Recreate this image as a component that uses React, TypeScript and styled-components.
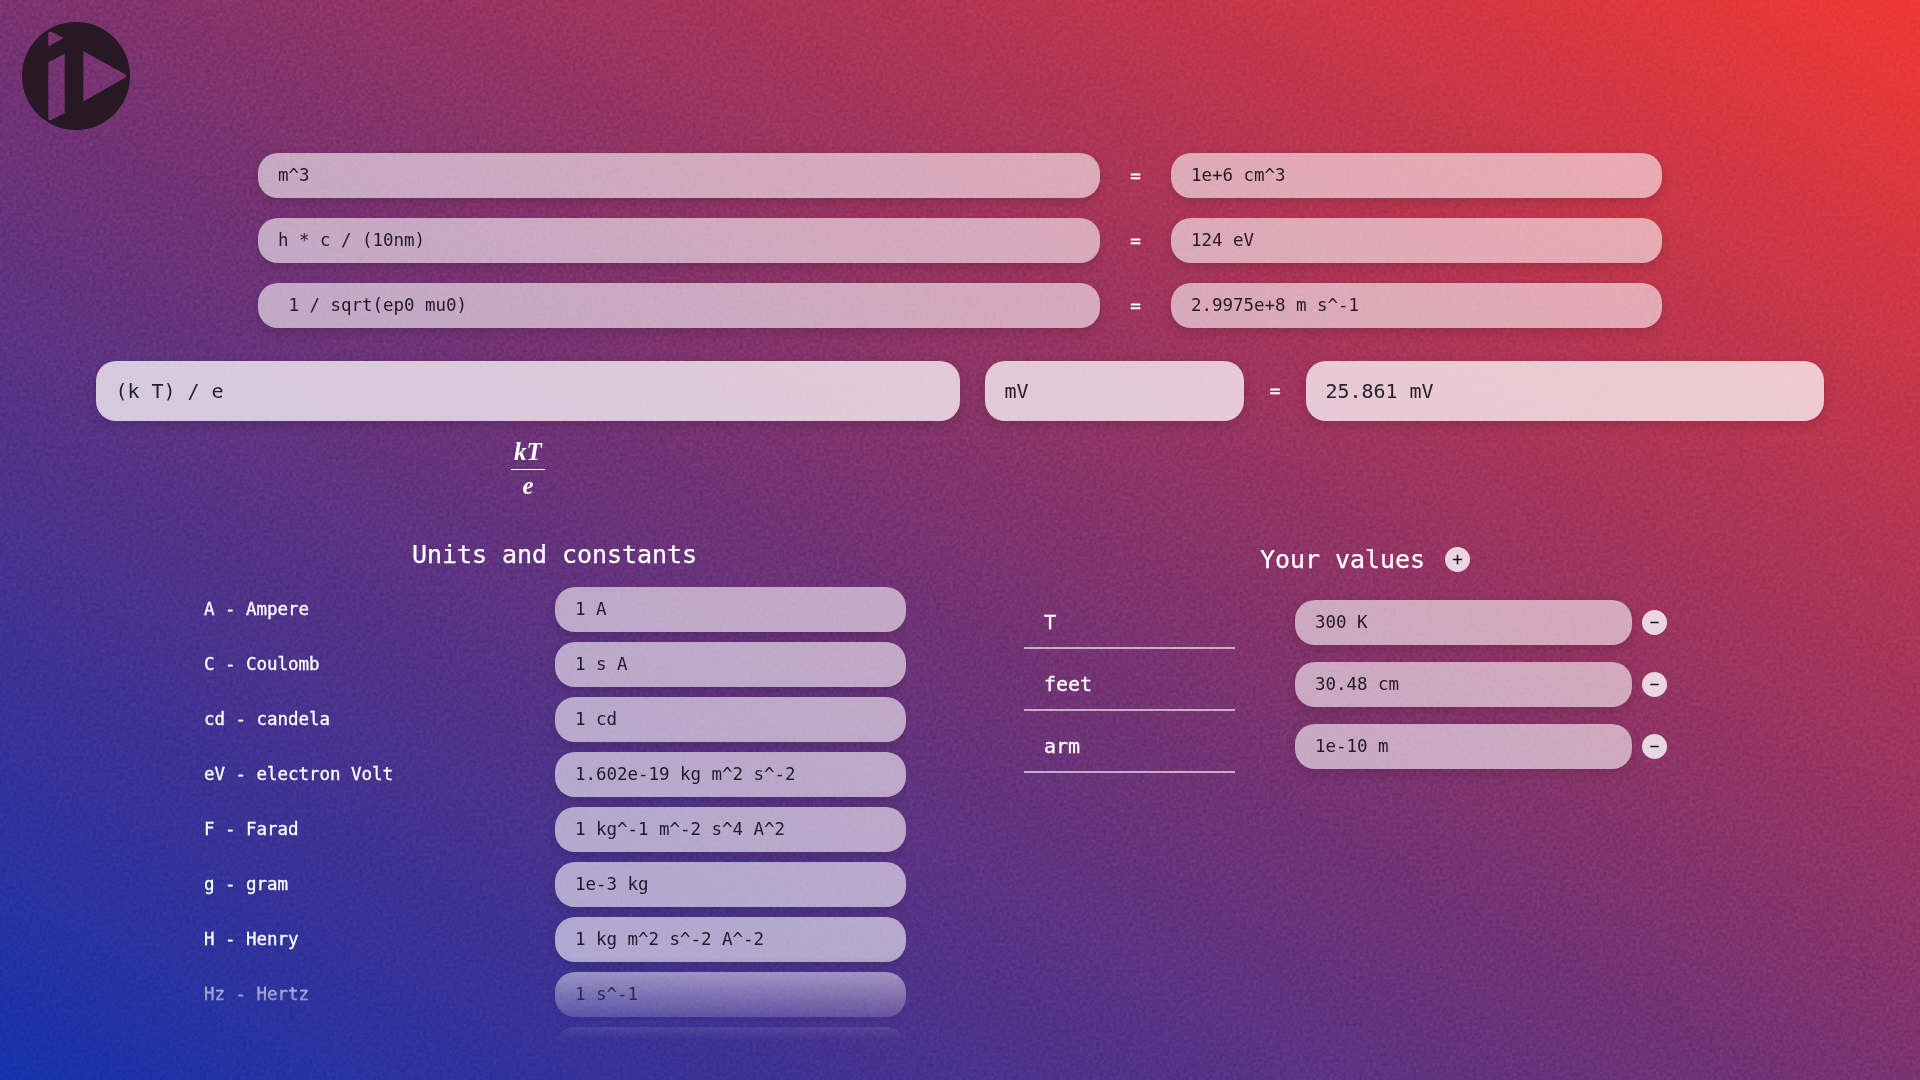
import React from 'react';
import styled, { createGlobalStyle } from 'styled-components';

const Global = createGlobalStyle`
  * { box-sizing: border-box; }
  html, body { margin: 0; height: 100%; overflow: hidden; }
`;

const Page = styled.main`
  position: relative;
  isolation: isolate;
  width: 1920px;
  height: 1080px;
  overflow: hidden;
  padding-top: 153px;
  color: #fff;
  font-family: 'DejaVu Sans Mono', 'Liberation Mono', monospace;
  background: linear-gradient(to top right, #1632ac, #7a3370 50%, #f03834);
`;

const Grain = styled.svg`
  position: absolute;
  inset: 0;
  z-index: -1;
  width: 100%;
  height: 100%;
  opacity: 0.11;
  mix-blend-mode: overlay;
`;

const Logo = styled.svg`
  position: absolute;
  left: 22px;
  top: 22px;
  width: 108px;
  height: 108px;
`;

const Field = styled.input<{ $large?: boolean }>`
  display: block;
  width: 100%;
  min-width: 0;
  height: ${(p) => (p.$large ? 60 : 45)}px;
  padding: ${(p) => (p.$large ? '0 20px 0 19.5px' : '0 20px 2px')};
  border: 0;
  border-radius: 20px;
  outline: 0;
  color: rgba(16, 10, 20, 0.9);
  font-family: 'DejaVu Sans Mono', 'Liberation Mono', monospace;
  font-size: ${(p) => (p.$large ? 20 : 17.5)}px;
  letter-spacing: -0.04px;
  background: rgba(255, 252, 253, ${(p) => (p.$large ? 0.75 : 0.59)});
  box-shadow: 0 4px 12px rgba(0, 0, 0, 0.15);
`;

const History = styled.section`
  display: flex;
  flex-direction: column;
  gap: 20px;
  width: 1404px;
  margin: 0 auto;
`;

const HistoryRow = styled.div`
  display: grid;
  grid-template-columns: 842px 71px 491px;
  align-items: center;
`;

const Equals = styled.span`
  font-size: 17.5px;
  line-height: 24px;
  text-align: center;
  -webkit-text-stroke: 0.4px #fff;
`;

const Calculator = styled.section`
  display: grid;
  grid-template-columns: 864px 259px 62px 518px;
  align-items: center;
  width: 1728px;
  margin: 33px auto 0;

  & > :first-child {
    width: 864px;
  }

  grid-template-columns: 889px 259px 62px 518px;
`;

const Preview = styled.div`
  display: flex;
  justify-content: center;
  width: 864px;
  height: 109px;
  margin-left: 96px;
  padding-top: 16px;
`;

const Fraction = styled.div`
  display: flex;
  flex-direction: column;
  align-items: center;
  height: 66px;
  font: italic bold 25px/30px 'Liberation Serif', serif;
`;

const Numerator = styled.span`
  height: 33px;
  padding: 0 3px;
  border-bottom: 1px solid #fff;
`;

const Denominator = styled.span`
  padding-top: 1px;
`;

const Columns = styled.div`
  display: grid;
  grid-template-columns: 703px 639px;
  column-gap: 118px;
  padding-left: 203px;
  align-items: start;
`;

const Heading = styled.h2`
  margin: 0;
  padding-top: 1px;
  font-size: 25px;
  font-weight: 400;
  line-height: 30px;
  letter-spacing: -0.05px;
  -webkit-text-stroke: 0.25px #fff;
`;

const Units = styled.section`
  padding-top: 9px;
  text-align: center;
`;

const UnitList = styled.div`
  display: flex;
  flex-direction: column;
  gap: 10px;
  height: 455px;
  margin-top: 17px;
  overflow: hidden;
  text-align: left;
  -webkit-mask-image: linear-gradient(to bottom, #000 370px, transparent 453px);
  mask-image: linear-gradient(to bottom, #000 370px, transparent 453px);
`;

const UnitRow = styled.label`
  display: grid;
  grid-template-columns: 352px 351px;
  align-items: center;
  flex: none;
  font-size: 17.5px;

  & > span {
    padding: 0 0 2px 1px;
    letter-spacing: -0.04px;
    -webkit-text-stroke: 0.3px #fff;
  }
`;

const Values = styled.section`
  padding-top: 14px;
`;

const ValuesHeader = styled.div`
  display: flex;
  align-items: center;
  gap: 20px;
  height: 30px;
  padding-left: 236px;
`;

const Round = styled.button`
  display: grid;
  place-items: center;
  width: 25px;
  height: 25px;
  padding: 0;
  border: 0;
  border-radius: 50%;
  color: #171219;
  background: rgba(255, 255, 255, 0.8);
`;

const ValueList = styled.div`
  display: flex;
  flex-direction: column;
  gap: 13px;
  margin-top: 26px;
`;

const ValueRow = styled.div`
  display: grid;
  grid-template-columns: 211px 337px 25px;
  column-gap: 60px;
  height: 49px;

  & > :last-child {
    margin: 10px 0 0 -50px;
  }
`;

const Name = styled.input`
  width: 211px;
  height: 49px;
  padding: 0 20px 3px;
  border: 0;
  border-bottom: 2px solid rgba(255, 255, 255, 0.6);
  outline: 0;
  color: #fff;
  font-family: 'DejaVu Sans Mono', 'Liberation Mono', monospace;
  font-size: 20px;
  background: transparent;
  -webkit-text-stroke: 0.3px #fff;
`;

const history = [
  ['m^3', '1e+6 cm^3'],
  ['h * c / (10nm)', '124 eV'],
  [' 1 / sqrt(ep0 mu0)', '2.9975e+8 m s^-1'],
];

const units = [
  ['A - Ampere', '1 A'],
  ['C - Coulomb', '1 s A'],
  ['cd - candela', '1 cd'],
  ['eV - electron Volt', '1.602e-19 kg m^2 s^-2'],
  ['F - Farad', '1 kg^-1 m^-2 s^4 A^2'],
  ['g - gram', '1e-3 kg'],
  ['H - Henry', '1 kg m^2 s^-2 A^-2'],
  ['Hz - Hertz', '1 s^-1'],
  ['', ''],
];

const values = [
  ['T', '300 K'],
  ['feet', '30.48 cm'],
  ['arm', '1e-10 m'],
];

const Sign = ({ plus }: { plus?: boolean }) => (
  <svg width="25" height="25" viewBox="0 0 25 25" stroke="currentColor" strokeWidth="1.5">
    <path d={plus ? 'M7.8 12.5h9.4M12.5 7.8v9.4' : 'M8.3 12.5h8.4'} />
  </svg>
);

export default function App() {
  return (
    <Page>
      <Global />
      <Grain>
        <filter id="grain" x="0" y="0" width="100%" height="100%" colorInterpolationFilters="sRGB">
          <feTurbulence type="fractalNoise" baseFrequency="0.3" numOctaves="3" />
          <feColorMatrix
            type="matrix"
            values="1.4 0 0 0 -0.22  1.4 0 0 0 -0.22  1.4 0 0 0 -0.22  0 0 0 0 1"
          />
        </filter>
        <rect width="100%" height="100%" filter="url(#grain)" />
      </Grain>
      <Logo viewBox="22 22 108 108">
        <path
          fill="#261824"
          fillRule="evenodd"
          d="M76 22a54 54 0 1 1 0 108a54 54 0 1 1 0-108ZM48.3 33.3v13.2L62.5 38.5Q63.5 38 62.5 37.2L51 31.8Q48.3 31.5 48.3 33.3ZM48.3 62.5v56.2Q48.3 121 51 120L64.7 113V53.5ZM83.3 51v50.5L125 77.8Q127.5 76 125 74.3Z"
        />
      </Logo>
      <History>
        {history.map(([expression, result]) => (
          <HistoryRow key={expression}>
            <Field readOnly value={expression} />
            <Equals>=</Equals>
            <Field readOnly value={result} />
          </HistoryRow>
        ))}
      </History>
      <Calculator>
        <Field $large readOnly value="(k T) / e" />
        <Field $large readOnly value="mV" />
        <Equals>=</Equals>
        <Field $large readOnly value="25.861 mV" />
      </Calculator>
      <Preview>
        <Fraction>
          <Numerator>kT</Numerator>
          <Denominator>e</Denominator>
        </Fraction>
      </Preview>
      <Columns>
        <Units>
          <Heading>Units and constants</Heading>
          <UnitList>
            {units.map(([name, value]) => (
              <UnitRow key={name}>
                <span>{name}</span>
                <Field readOnly value={value} />
              </UnitRow>
            ))}
          </UnitList>
        </Units>
        <Values>
          <ValuesHeader>
            <Heading>Your values</Heading>
            <Round aria-label="Add value">
              <Sign plus />
            </Round>
          </ValuesHeader>
          <ValueList>
            {values.map(([name, value]) => (
              <ValueRow key={name}>
                <Name readOnly value={name} />
                <Field readOnly value={value} />
                <Round aria-label="Remove value">
                  <Sign />
                </Round>
              </ValueRow>
            ))}
          </ValueList>
        </Values>
      </Columns>
    </Page>
  );
}
